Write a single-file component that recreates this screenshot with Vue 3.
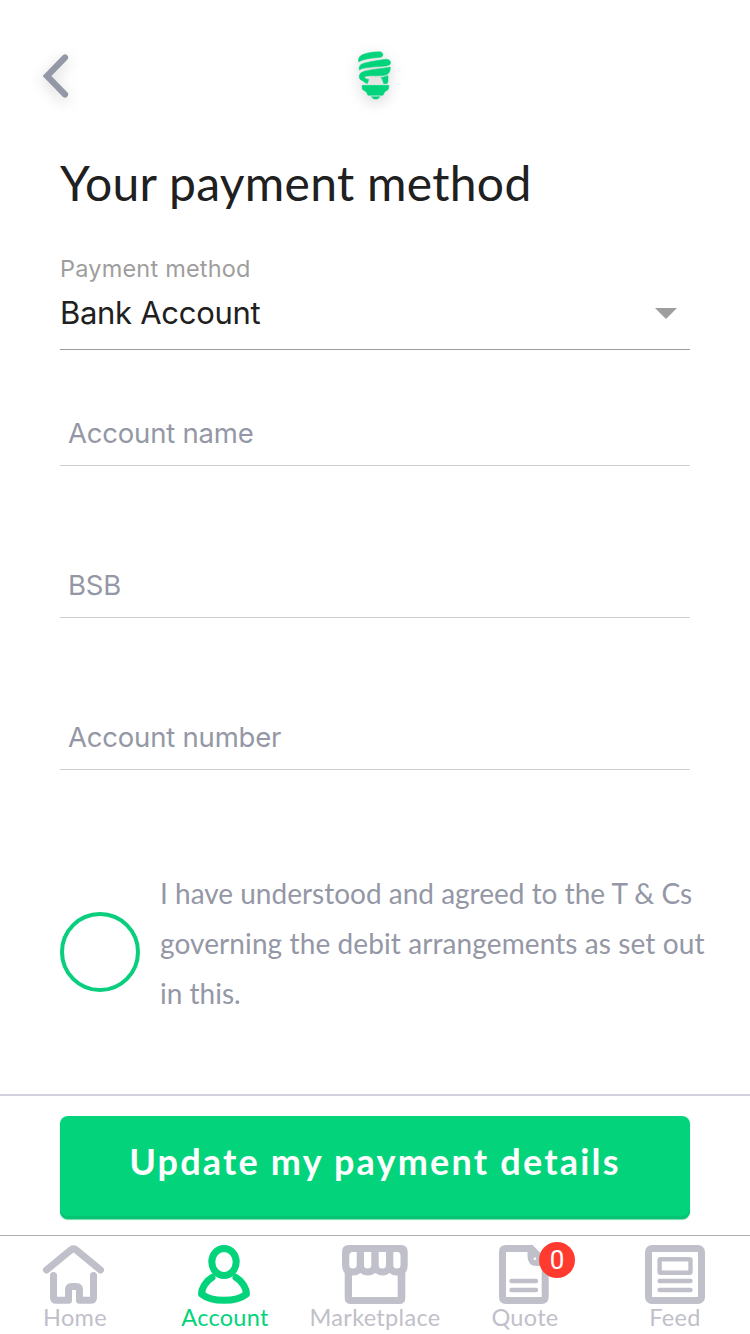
<template>
  <div class="page">
    <header class="topbar">
      <button class="back" aria-label="Back">
        <svg width="28" height="46" viewBox="0 0 28 46">
          <path d="M24 4.500L6 23L24 41.500" />
        </svg>
      </button>
      <svg class="logo" width="40" height="55" viewBox="60 55 120 165">
        <path d="M71 97C69 84 75 77 88 73C103 68 119 66 134 66C146 67 147 81 136 83C116 86 92 85 71 97Z" />
        <path d="M73 121C71 108 77 103 90 100C111 95 133 92 151 89C167 87 172 103 161 107C142 114 94 108 73 121Z" />
        <path d="M73 145C71 132 79 127 91 124C112 119 137 118 166 112C166 128 160 135 148 137C126 141 100 135 88 142C90 147 95 149 101 149L98 161L92 161C89 154 76 153 73 145Z" />
        <path d="M138 144L159 138V157L156 162H146C144 155 143 149 138 144Z" />
        <path d="M81 167H162L160 179C158 183 151 184 149 187L144 197H99L94 187C90 184 84 182 82 178Z" />
        <path d="M109 201H135L128 208H116Z" />
      </svg>
    </header>

    <main class="content">
      <h1>Your payment method</h1>
      <div class="select">
        <label>Payment method</label>
        <div class="value">
          <span>{{ method }}</span>
          <i class="caret"></i>
        </div>
      </div>
      <input
        v-for="field in fields"
        :key="field.name"
        v-model="field.value"
        :class="['field', field.name]"
        :placeholder="field.label"
      />
      <div class="terms" @click="agreed = !agreed">
        <span class="circle" :class="{ checked: agreed }"></span>
        <p>
          I have understood and agreed to the T &amp; Cs<br />
          <span class="wide">governing the debit arrangements as set out</span><br />
          in this.
        </p>
      </div>
    </main>

    <div class="action">
      <button class="update">Update my payment details</button>
    </div>

    <nav class="tabs">
      <a class="tab home">
        <svg width="150" height="65" viewBox="0 0 150 65">
          <path d="M46.500 30L70.500 10.200Q73.500 7.700 76.500 10.200L100.500 30" />
          <path d="M53.500 35.500V57.500Q53.500 60.300 56.500 60.300H68.500V50Q68.500 46.500 72 46.500H76Q79.500 46.500 79.500 50V60.300H90.500Q93.500 60.300 93.500 57.500V35.500" />
        </svg>
        <span>Home</span>
      </a>
      <a class="tab account active">
        <svg width="150" height="65" viewBox="0 0 150 65">
          <ellipse cx="74" cy="22" rx="12.200" ry="13.500" />
          <path d="M62 37.500C56 41 51.500 48 51.500 54C57 58.500 65 60.300 74 60.300C83 60.300 91 58.500 96.500 54C96.500 48 92 41 86 37.500" />
        </svg>
        <span>Account</span>
      </a>
      <a class="tab marketplace">
        <svg width="150" height="65" viewBox="0 0 150 65">
          <path
            class="solid"
            d="M49 5H101Q107.700 5 107.700 12V25Q107.700 30 105.300 33V58Q105.300 64 99 64H51Q44.700 64 44.700 58V33Q42 30 42 25V12Q42 5 49 5ZM52.700 12Q49.300 12 49.300 16V25Q49.300 28.500 53 28.500Q56.700 28.500 56.700 25V12ZM64 12V25Q64 28.500 67.700 28.500Q71.300 28.500 71.300 25V12ZM78.700 12V25Q78.700 28.500 82.300 28.500Q86 28.500 86 25V12ZM93.300 12V25Q93.300 28.500 97 28.500Q100.500 28.500 100.500 25V16Q100.500 12 97.500 12ZM52 35.500V57H97.700V35.500Q93 36 89.700 33Q82.500 38 75.500 33Q67.500 38 60.300 33Q57 36 52 35.500Z"
          />
        </svg>
        <span>Marketplace</span>
      </a>
      <a class="tab quote">
        <svg width="150" height="65" viewBox="0 0 150 65">
          <path d="M81 8.500H56Q52.500 8.500 52.500 12V57Q52.500 60.500 56 60.500H91.500Q95.200 60.500 95.200 57V22.500L81 8.500V16Q81 22.500 87 22.500H95" />
          <path class="thin" d="M61.500 41H86M61.500 50H86" />
          <circle class="hole" cx="84.800" cy="18.800" r="1.300" />
        </svg>
        <b class="badge">{{ quotes }}</b>
        <span>Quote</span>
      </a>
      <a class="tab feed">
        <svg width="150" height="65" viewBox="0 0 150 65">
          <rect x="48.500" y="8.500" width="53" height="52" rx="3.500" />
          <rect class="thin" x="59.600" y="19.200" width="30.900" height="13.500" rx="1" />
          <path class="thin" d="M59.600 41H90.500M59.600 50H90.500" />
        </svg>
        <span>Feed</span>
      </a>
    </nav>
  </div>
</template>

<script setup>
import { ref } from "vue";

const method = ref("Bank Account");
const agreed = ref(false);
const quotes = ref(0);
const fields = ref([
  { name: "name", label: "Account name", value: "" },
  { name: "bsb", label: "BSB", value: "" },
  { name: "number", label: "Account number", value: "" },
]);
</script>

<style>
body {
  margin: 0;
  background: #fff;
}
</style>

<style scoped>
.page {
  display: flex;
  flex-direction: column;
  width: 750px;
  height: 1334px;
  overflow: hidden;
  background: #fff;
  font-family: Lato, sans-serif;
  color: #202020;
}
button {
  border: 0;
  padding: 0;
  background: none;
  font: inherit;
}
svg {
  display: block;
}

.topbar {
  display: grid;
  grid-template-columns: 1fr auto 1fr;
  box-sizing: border-box;
  height: 146px;
  padding: 48px 41px 0;
}
.back {
  justify-self: start;
  align-self: start;
  padding-top: 5px;
}
.back path {
  fill: none;
  stroke: #9497a5;
  stroke-width: 6.200;
  stroke-linecap: round;
}
.back svg,
.logo {
  overflow: visible;
  filter: drop-shadow(0 4px 7px rgba(0, 0, 0, 0.18));
}
.logo {
  fill: #03d47c;
  stroke: #03d47c;
  stroke-width: 1.500;
}

.content {
  display: flex;
  flex-direction: column;
  height: 948px;
  padding: 0 40px 0 60px;
}
h1 {
  height: 76px;
  margin: 0 0 32px;
  font-size: 48px;
  font-weight: 400;
  line-height: 74px;
  letter-spacing: 0.300px;
  white-space: nowrap;
}
.select {
  width: 630px;
  height: 95px;
  border-bottom: 1px solid #9b9b9b;
  font-family: Inter, sans-serif;
}
.select label {
  display: block;
  height: 30px;
  color: #9e9e9e;
  font-size: 23.500px;
  line-height: 30px;
  letter-spacing: 0.200px;
}
.value {
  display: flex;
  align-items: center;
  justify-content: space-between;
  height: 58px;
  padding-right: 13px;
  font-size: 31px;
  letter-spacing: -0.300px;
}
.value span {
  padding-bottom: 2px;
}
.caret {
  border: 11px solid transparent;
  border-top-color: #9e9e9e;
  border-bottom: 0;
}
.field {
  box-sizing: border-box;
  width: 630px;
  height: 64px;
  margin-bottom: 88px;
  padding: 0 8px 2px;
  border: 0;
  border-bottom: 1px solid #cfcfd2;
  outline: none;
  flex: none;
  font-family: Inter, sans-serif;
  font-size: 27.500px;
  letter-spacing: -0.200px;
}
.field.name {
  margin-top: 52px;
}
.field::placeholder {
  color: #9497a5;
  opacity: 1;
}
.terms {
  display: flex;
  align-items: center;
  gap: 20px;
  height: 150px;
  margin-top: 10px;
}
.circle {
  box-sizing: border-box;
  flex: none;
  width: 80px;
  height: 80px;
  margin-top: 17px;
  border: 4px solid #09ce7e;
  border-radius: 50%;
}
.circle.checked {
  background: #03d47c;
}
.terms p {
  margin: 0;
  color: #9497a5;
  font-size: 28px;
  line-height: 50px;
  white-space: nowrap;
}
.wide {
  letter-spacing: 0.100px;
}

.action {
  box-sizing: border-box;
  height: 141px;
  padding: 20px 60px 0;
  border-top: 2px solid #d0d1dc;
}
.update {
  width: 630px;
  height: 103px;
  padding-bottom: 14px;
  border-radius: 8px;
  background: #03d47c;
  box-shadow: inset 0 -3px 0 #07c474, 0 1px 1px #70dcae;
  color: #fff;
  font-size: 36px;
  font-weight: 700;
  letter-spacing: 2.200px;
}

.tabs {
  display: flex;
  box-sizing: border-box;
  height: 99px;
  border-top: 1px solid #b0b0b3;
}
.tab {
  position: relative;
  width: 150px;
  padding-top: 4px;
  color: #bfc0c9;
  font-size: 23.500px;
  line-height: 25px;
  letter-spacing: 0.300px;
  text-align: center;
}
.tab.active {
  color: #03d47c;
}
.tab svg {
  fill: none;
  stroke: currentColor;
  stroke-width: 7;
  stroke-linecap: round;
  stroke-linejoin: round;
}
.tab svg .thin {
  stroke-width: 4.400;
}
.tab svg .solid {
  fill: currentColor;
  stroke: none;
}
.tab svg .hole {
  fill: #fff;
  stroke: none;
}
.badge {
  position: absolute;
  top: 6px;
  left: 89px;
  width: 36px;
  height: 36px;
  border-radius: 50%;
  background: #ff3b30;
  color: #fff;
  font-family: Roboto, sans-serif;
  font-size: 26px;
  font-weight: 400;
  line-height: 36px;
  letter-spacing: 0;
}
</style>
